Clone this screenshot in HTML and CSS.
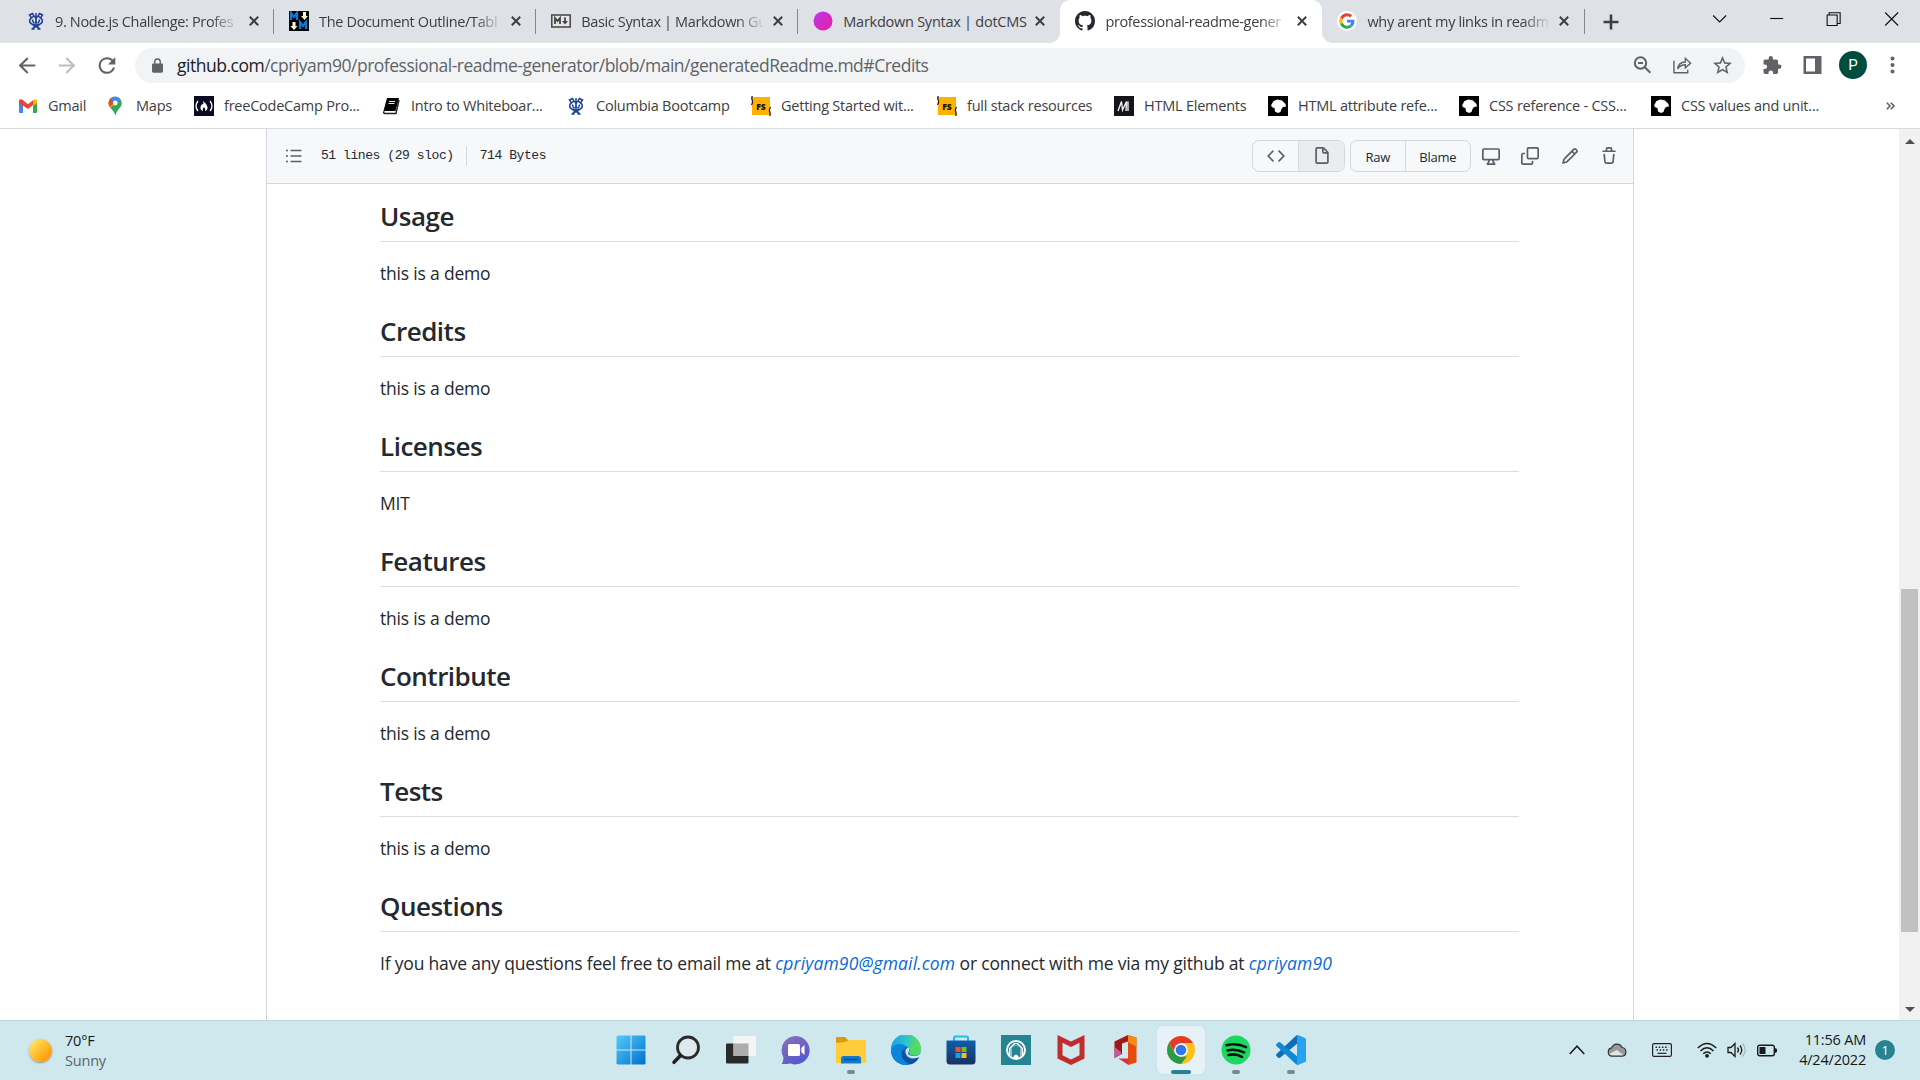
FILE: index.html
```html
<!DOCTYPE html>
<html lang="en">
<head>
<meta charset="utf-8">
<title>professional-readme-generator</title>
<link rel="stylesheet" href="styles.css">
</head>
<body>
<svg class="defs" width="0" height="0">
  <defs>
    <symbol id="close" viewBox="0 0 10 10"><path d="M.8.8l8.400 8.400M9.200.8L.8 9.200" stroke="#3c4043" stroke-width="2" fill="none"/></symbol>
    <symbol id="crown" viewBox="0 0 16 18"><g fill="none" stroke="#1d3f94" stroke-width="1.500"><path d="M1.500 3l3-1.500L6 4 3.500 6zM14.500 3l-3-1.500L10 4l2.500 2zM8 1v11M6 4q3 2 1.500 7M10 4Q7 6 8.500 11M3 6q-2 2-1 4.500Q4 13 8 13t6-2.500q1-2.500-1-4.500M4.500 7.500q0 2.500 2 4M11.500 7.500q0 2.500-2 4M4 17l2-1.500L11.500 13M12 17l-2-1.500L4.500 13M3.500 17h3M9.500 17h3"/></g></symbol>
    <symbol id="fs" viewBox="0 0 20 20"><path d="M1 1h18v18H1z" fill="#ffb000"/><path d="M1.500 0Q.2 1.500 1.200 4T.5 9M18.500 20q1.300-1.500.3-4T19.500 11" stroke="#222" stroke-width="1.300" fill="none"/><text x="10" y="13.500" text-anchor="middle" font-family="Open Sans, sans-serif" font-weight="800" font-size="8.500" letter-spacing="0" fill="#111">FS</text></symbol>
    <symbol id="dino" viewBox="0 0 20 20"><path d="M0 0h20v20H0z" fill="#000"/><path d="M3 9.500L5.500 5l4-1.500 4.500 1 3.500 3.500.5 2.500-3 .5-1.500 2-1 3-2.500 1-3-1.500-.5-3.500-2-.5z" fill="#fff"/></symbol>
  </defs>
</svg>

<header class="browser">
  <div class="tabstrip">
    <div class="tab"><svg class="fav" viewBox="-1 -1 20 20"><use href="#crown" width="16" height="18"/></svg><span class="tab-title">9. Node.js Challenge: Profes</span><svg class="x"><use href="#close"/></svg></div>
    <div class="tab"><svg class="fav" viewBox="0 0 20 20"><path d="M0 0h20v20H0z" fill="#000"/><path d="M2 9V2l3 4 3-4v7M11 18v-7l3 4 3-4v7" fill="none" stroke="#0a7bd6" stroke-width="2.200"/><path d="M14 1h3v4h2l-3.500 4L12 5h2zM3.500 11h3v4h2L5 19l-3.500-4h2z" fill="#fff8dc"/></svg><span class="tab-title">The Document Outline/Tabl</span><svg class="x"><use href="#close"/></svg></div>
    <div class="tab"><svg class="fav" viewBox="0 0 20 20"><path d="M.8 4h18.400v12H.8z" fill="#e6e6e6" stroke="#444" stroke-width="1.500"/><path d="M4 13V7l2.500 3L9 7v6M14 6.500v5" fill="none" stroke="#444" stroke-width="1.800"/><path d="M11 10h6l-3 3.500z" fill="#444"/></svg><span class="tab-title">Basic Syntax | Markdown Gu</span><svg class="x"><use href="#close"/></svg></div>
    <div class="tab"><svg class="fav" viewBox="0 0 20 20"><defs><linearGradient id="pk" x1="0" x2="1" y1="0" y2="1"><stop stop-color="#b83bf0"/><stop offset="1" stop-color="#ec1c9a"/></linearGradient></defs><circle cx="10" cy="10" r="9.500" fill="url(#pk)"/></svg><span class="tab-title">Markdown Syntax | dotCMS</span><svg class="x"><use href="#close"/></svg></div>
    <div class="tab active"><svg class="fav" viewBox="0 0 16 16"><path fill="#24292f" d="M8 0C3.580 0 0 3.580 0 8c0 3.540 2.290 6.530 5.470 7.590.4.070.55-.17.55-.38 0-.19-.01-.82-.01-1.490-2.010.37-2.530-.49-2.690-.94-.09-.23-.48-.94-.82-1.130-.28-.15-.68-.52-.01-.53.63-.01 1.080.58 1.230.82.72 1.210 1.870.87 2.330.66.07-.52.28-.87.51-1.070-1.780-.2-3.640-.89-3.640-3.950 0-.87.31-1.590.82-2.150-.08-.2-.36-1.020.08-2.120 0 0 .67-.21 2.200.82.64-.18 1.320-.27 2-.27s1.360.09 2 .27c1.530-1.040 2.200-.82 2.200-.82.44 1.100.16 1.920.08 2.120.51.56.82 1.270.82 2.150 0 3.070-1.870 3.750-3.650 3.950.29.25.54.73.54 1.480 0 1.070-.01 1.930-.01 2.200 0 .21.15.46.55.38A8.013 8.013 0 0016 8c0-4.420-3.580-8-8-8z"/></svg><span class="tab-title">professional-readme-gener</span><svg class="x"><use href="#close"/></svg></div>
    <div class="tab"><svg class="fav" viewBox="-7 -7 62 62"><circle cx="24" cy="24" r="31" fill="#fff"/><path fill="#EA4335" d="M24 9.500c3.540 0 6.710 1.220 9.210 3.600l6.850-6.850C35.900 2.380 30.470 0 24 0 14.620 0 6.510 5.380 2.560 13.220l7.980 6.190C12.430 13.720 17.740 9.500 24 9.500z"/><path fill="#4285F4" d="M46.980 24.550c0-1.570-.15-3.090-.38-4.550H24v9.020h12.940c-.58 2.960-2.260 5.480-4.780 7.180l7.730 6c4.510-4.180 7.090-10.360 7.090-17.650z"/><path fill="#FBBC05" d="M10.530 28.590A14.500 14.500 0 019.770 24c0-1.600.27-3.140.76-4.590l-7.980-6.190A23.900 23.900 0 000 24c0 3.880.92 7.540 2.560 10.780l7.970-6.190z"/><path fill="#34A853" d="M24 48c6.480 0 11.930-2.130 15.890-5.810l-7.730-6c-2.150 1.450-4.920 2.300-8.160 2.300-6.260 0-11.570-4.220-13.470-9.910l-7.980 6.190C6.510 42.620 14.620 48 24 48z"/></svg><span class="tab-title">why arent my links in readm</span><svg class="x"><use href="#close"/></svg></div>
    <svg class="newtab" viewBox="0 0 16 16"><path d="M8 .5v15M.5 8h15" stroke="#3c4043" stroke-width="2.600"/></svg>
    <div class="winctl">
      <svg viewBox="0 0 14 14"><path d="M.5 3.500l6.500 6.500 6.500-6.500"/></svg>
      <svg viewBox="0 0 14 14"><path d="M.5 6.500h13"/></svg>
      <svg viewBox="0 0 14 14"><path d="M.5 3h10v10.500H.5zM2.500 3V.7h11v10.800h-3"/></svg>
      <svg viewBox="0 0 14 14"><path d="M.5.5l13 13M13.500.5l-13 13"/></svg>
    </div>
  </div>

  <div class="toolbar">
    <div class="nav">
      <svg viewBox="0 0 24 24"><path d="M20 11H7.830l5.590-5.590L12 4l-8 8 8 8 1.410-1.410L7.830 13H20z"/></svg>
      <svg class="off" viewBox="0 0 24 24"><path d="M4 11h12.170l-5.590-5.590L12 4l8 8-8 8-1.410-1.410L16.170 13H4z"/></svg>
      <svg viewBox="0 0 24 24"><path d="M17.650 6.350A7.958 7.958 0 0012 4c-4.420 0-7.990 3.580-7.990 8s3.570 8 7.990 8c3.730 0 6.840-2.550 7.730-6h-2.080A5.990 5.990 0 0112 18c-3.310 0-6-2.690-6-6s2.690-6 6-6c1.660 0 3.140.69 4.220 1.780L13 11h7V4z"/></svg>
    </div>
    <div class="omnibox">
      <svg class="lock" viewBox="4 1 16 21"><path fill-rule="evenodd" d="M18 8.500h-1V6A5 5 0 007 6v2.500H6c-1.100 0-2 .9-2 2V20c0 1.100.9 2 2 2h12c1.100 0 2-.9 2-2v-9.500c0-1.100-.9-2-2-2zM9 8.500V6a3 3 0 016 0v2.500z"/></svg>
      <span class="url"><b>github.com</b>/cpriyam90/professional-readme-generator/blob/main/generatedReadme.md#Credits</span>
      <div class="omni-icons">
        <svg viewBox="0 0 18 18" class="line"><circle cx="7" cy="7" r="5.700"/><path d="M11.300 11.300l5.500 5.500M4.500 7h5"/></svg>
        <svg viewBox="0 0 20 18" class="line thin"><path d="M1 4.500v12.700h14.500V14M5 13c.4-4.500 3-7 8-7.200V2l5.500 5.200L13 12V8.800c-3.800 0-6 1.200-8 4.200z"/></svg>
        <svg viewBox="2 2 20 19"><path d="M22 9.240l-7.190-.62L12 2 9.190 8.630 2 9.240l5.460 4.730L5.820 21 12 17.270 18.180 21l-1.630-7.030zM12 15.400l-3.760 2.270 1-4.280-3.320-2.880 4.380-.38L12 6.100l1.710 4.040 4.380.38-3.320 2.880 1 4.280z"/></svg>
      </div>
    </div>
    <div class="tools">
      <svg viewBox="2 1 21 21"><path d="M20.500 11H19V7c0-1.100-.9-2-2-2h-4V3.500a2.500 2.500 0 00-5 0V5H4c-1.100 0-1.990.9-1.990 2v3.800H3.500a2.700 2.700 0 010 5.400H2V20c0 1.100.9 2 2 2h3.800v-1.500a2.700 2.700 0 015.400 0V22H17c1.100 0 2-.9 2-2v-4h1.500a2.500 2.500 0 000-5z"/></svg>
      <svg viewBox="0 0 18 18"><path fill-rule="evenodd" d="M0 0h18v18H0zM2.500 2.500v13h9v-13z"/></svg>
      <span class="avatar">P</span>
      <svg viewBox="0 0 18 18"><circle cx="9" cy="2.500" r="2"/><circle cx="9" cy="9" r="2"/><circle cx="9" cy="15.500" r="2"/></svg>
    </div>
  </div>

  <nav class="bookmarks">
    <a><svg viewBox="0 0 20 20"><path d="M1 4h4v13H2q-1 0-1-1z" fill="#4285f4"/><path d="M15 4h4v12q0 1-1 1h-3z" fill="#34a853"/><path d="M1 4.500Q2 2.500 4 3.500l6 4.800 6-4.800v4.700L10 13 1 7z" fill="#ea4335"/><path d="M15 4.500q3-2.500 4 0V7l-4 3z" fill="#fbbc04"/></svg><span>Gmail</span></a>
    <a><svg viewBox="0 0 20 20"><path d="M2.500 7a6.700 6.700 0 0113.300 0c0 5-5.300 6-6.300 13C8.500 14 2.500 12 2.500 7z" fill="#34a853"/><path d="M2.500 7q0-3 2-5l5 5-5.500 5Q2.500 10 2.500 7z" fill="#fbbc04"/><path d="M2.500 7.500q0-3.500 2-5.300L9 6 4 11z" fill="#ea4335"/><path d="M4.300 2.400a6.800 6.800 0 0110.500 1.200L10 8z" fill="#4285f4"/><circle cx="9.200" cy="7" r="2.400" fill="#fff"/></svg><span>Maps</span></a>
    <a><svg viewBox="0 0 20 20"><path d="M0 0h20v20H0z" fill="#0a0a23"/><path d="M4 5q-4 5 0 10M16 5q4 5 0 10" stroke="#fff" stroke-width="1.300" fill="none"/><path d="M9 5q4 3 4.500 6 .3 3-2.500 4 1-2-1-4-2 2-1 4-3-1-2.500-4Q7 8 9.500 8z" fill="#fff"/></svg><span>freeCodeCamp Pro...</span></a>
    <a><svg viewBox="0 0 20 20"><path d="M6 2h12l-3.500 13H2.500z" fill="#000"/><path d="M18 4l-3 13.500H3.500q-2-1 0-2" stroke="#222" stroke-width="1.400" fill="none"/><path d="M8 5.500h6M7.500 7.500h6" stroke="#fff" stroke-width=".9"/></svg><span>Intro to Whiteboar...</span></a>
    <a><svg viewBox="-2 -1 20 20"><use href="#crown" width="16" height="18"/></svg><span>Columbia Bootcamp</span></a>
    <a><svg><use href="#fs"/></svg><span>Getting Started wit...</span></a>
    <a><svg><use href="#fs"/></svg><span>full stack resources</span></a>
    <a><svg viewBox="0 0 20 20"><path d="M0 0h20v20H0z" fill="#15141a"/><path d="M4 15L7.500 5.500 8.500 14l4-8.500-.5 9.500M14 5.500v9.500" stroke="#eee" stroke-width="1.400" fill="none"/></svg><span>HTML Elements</span></a>
    <a><svg><use href="#dino"/></svg><span>HTML attribute refe...</span></a>
    <a><svg><use href="#dino"/></svg><span>CSS reference - CSS...</span></a>
    <a><svg><use href="#dino"/></svg><span>CSS values and unit...</span></a>
    <svg class="more" viewBox="0 0 9 8"><path d="M.8.8L4 4 .8 7.200M4.800.8L8 4 4.800 7.200" fill="none" stroke="#5f6368" stroke-width="1.600"/></svg>
  </nav>
</header>

<div class="viewport">
  <main class="file">
    <div class="file-head">
      <svg class="toc" viewBox="0 0 16 14"><g fill="#57606a"><circle cx="1" cy="1.500" r="1"/><circle cx="1" cy="7" r="1"/><circle cx="1" cy="12.500" r="1"/></g><path d="M4.500 1.500h11M4.500 7h11M4.500 12.500h11" stroke="#57606a" stroke-width="1.600"/></svg>
      <span class="mono">51 lines (29 sloc)</span><i class="vr"></i><span class="mono">714 Bytes</span>
      <div class="group views">
        <span><svg class="oct" viewBox="0 0 16 16"><path d="M4.720 3.220a.75.75 0 011.060 1.060L2.060 8l3.720 3.720a.75.75 0 11-1.060 1.060L.47 8.530a.75.75 0 010-1.060zm6.560 0a.75.75 0 10-1.060 1.060L13.940 8l-3.720 3.720a.75.75 0 101.060 1.060l4.250-4.250a.75.75 0 000-1.060z"/></svg></span>
        <span class="selected"><svg class="oct" viewBox="0 0 16 16"><path fill-rule="evenodd" d="M3.750 1.500a.25.25 0 00-.25.25v11.500c0 .138.112.25.25.25h8.500a.25.25 0 00.25-.25V6H9.750A1.750 1.750 0 018 4.250V1.500H3.750zm5.750.56v2.190c0 .138.112.25.25.25h2.190L9.500 2.060zM2 1.750C2 .784 2.784 0 3.750 0h5.086c.464 0 .909.184 1.237.513l3.414 3.414c.329.328.513.773.513 1.237v8.086A1.750 1.750 0 0112.250 15h-8.500A1.750 1.750 0 012 13.250V1.750z"/></svg></span>
      </div>
      <div class="group raw"><span>Raw</span><span>Blame</span></div>
      <div class="acts">
        <svg class="oct" viewBox="0 0 16 16"><path fill-rule="evenodd" d="M1.750 2.500h12.500a.25.25 0 01.25.25v7.500a.25.25 0 01-.25.25H1.750a.25.25 0 01-.25-.25v-7.500a.25.25 0 01.25-.25zM14.250 1H1.750A1.750 1.750 0 000 2.750v7.500C0 11.216.784 12 1.750 12h3.727c-.1 1.041-.52 1.872-1.292 2.757A.75.75 0 004.750 16h6.500a.75.75 0 00.565-1.243c-.772-.885-1.193-1.716-1.292-2.757h3.727A1.750 1.750 0 0016 10.250v-7.500A1.750 1.750 0 0014.250 1zM9.018 12H6.982a5.720 5.720 0 01-.765 2.500h3.566a5.720 5.720 0 01-.765-2.500z"/></svg>
        <svg class="oct" viewBox="0 0 16 16"><g fill="none" stroke="#57606a" stroke-width="1.500"><rect x="5.750" y=".75" width="9.500" height="9.500" rx="1"/><path d="M3.500 5.750H1.750a1 1 0 00-1 1v7.500a1 1 0 001 1h7.500a1 1 0 001-1V12.500"/></g></svg>
        <svg class="oct" viewBox="0 0 16 16"><path fill-rule="evenodd" d="M11.013 1.427a1.750 1.750 0 012.474 0l1.086 1.086a1.750 1.750 0 010 2.474l-8.610 8.610c-.21.21-.47.364-.756.445l-3.251.93a.75.75 0 01-.927-.928l.929-3.250a1.750 1.750 0 01.445-.758l8.610-8.610zm1.414 1.060a.25.25 0 00-.354 0L10.811 3.750l1.439 1.440 1.263-1.263a.25.25 0 000-.354l-1.086-1.086zM11.189 6.250L9.750 4.810l-6.286 6.287a.25.25 0 00-.064.108l-.558 1.953 1.953-.558a.249.249 0 00.108-.064l6.286-6.286z"/></svg>
        <svg class="oct" viewBox="0 0 16 16"><path fill-rule="evenodd" d="M6.500 1.750a.25.25 0 01.25-.25h2.500a.25.25 0 01.25.25V3h-3V1.750zm4.500 0V3h2.250a.75.75 0 010 1.500H2.750a.75.75 0 010-1.500H5V1.750C5 .784 5.784 0 6.750 0h2.500C10.216 0 11 .784 11 1.750zM4.496 6.675a.75.75 0 10-1.492.15l.66 6.600A1.750 1.750 0 005.405 15h5.190c.9 0 1.652-.681 1.741-1.576l.66-6.600a.75.75 0 00-1.492-.149l-.66 6.600a.25.25 0 01-.249.225h-5.190a.25.25 0 01-.249-.225l-.66-6.600z"/></svg>
      </div>
    </div>
    <article class="markdown">
      <h2>Usage</h2><p>this is a demo</p>
      <h2>Credits</h2><p>this is a demo</p>
      <h2>Licenses</h2><p>MIT</p>
      <h2>Features</h2><p>this is a demo</p>
      <h2>Contribute</h2><p>this is a demo</p>
      <h2>Tests</h2><p>this is a demo</p>
      <h2>Questions</h2><p>If you have any questions feel free to email me at <a>cpriyam90@gmail.com</a> or connect with me via my github at <a>cpriyam90</a></p>
    </article>
  </main>
  <div class="scrollbar">
    <svg viewBox="0 0 10 5"><path d="M0 5l5-5 5 5z"/></svg>
    <div class="thumb"></div>
    <svg viewBox="0 0 10 5"><path d="M0 0l5 5 5-5z"/></svg>
  </div>
</div>

<footer class="taskbar">
  <div class="weather"><i class="sun"></i><div><div>70°F</div><div class="dim">Sunny</div></div></div>
  <div class="apps">
    <span class="app"><svg viewBox="0 0 30 30"><defs><linearGradient id="win" x1="0" y1="0" x2="1" y2="1" ><stop stop-color="#53cbfb"/><stop offset="1" stop-color="#0070cf"/></linearGradient></defs><path fill="url(#win)" d="M1.500.5H14.500v14H.5v-13zM15.500.5h13l1 1v13h-14zM.5 15.500h14v14h-13l-1-1zM15.500 15.500h14v13l-1 1h-13z"/></svg></span>
    <span class="app"><svg viewBox="0 0 30 30"><circle cx="17" cy="12.500" r="10.500" fill="#dce9ed" stroke="#2b2b2b" stroke-width="2.800"/><path d="M9.500 20.500l-6.500 6.800" stroke="#222" stroke-width="3.600" stroke-linecap="round"/></svg></span>
    <span class="app"><svg viewBox="0 0 30 30"><rect y="8.500" width="22.500" height="20" rx="1" fill="#2a2a2a"/><rect x="7.500" y="1" width="22.500" height="20" rx="1" fill="#f5f5f5" opacity=".95"/><path d="M7.500 8.500h15V21h-15z" fill="#adadad"/></svg></span>
    <span class="app"><svg viewBox="0 0 30 30"><defs><linearGradient id="chat" x1="0" x2=".6" y1="0" y2="1"><stop stop-color="#8f70b5"/><stop offset="1" stop-color="#5458cf"/></linearGradient></defs><path d="M15 1a14.200 14.200 0 11-5.500 27.500Q6 29 .8 29q2-3 1.500-7A14.200 14.200 0 0115 1z" fill="url(#chat)"/><rect x="7" y="9" width="12" height="12" rx="1.500" fill="#fff"/><path d="M20.300 13l3.200-3v10l-3.200-3z" fill="#fff"/></svg></span>
    <span class="app running"><svg viewBox="0 0 30 30"><path d="M0 3q0-1 1-1h8l3 3h16v4H0z" fill="#dc9c0a"/><path d="M0 8l10-1.200 3-1.800h16q1 0 1 1v22H0z" fill="#ffcc3c"/><path d="M5 28.500v-5q0-2.500 2.500-2.500h15q2.500 0 2.500 2.500v5z" fill="#0f7bd0"/><path d="M8 24.500h14" stroke="#0a4b8c" stroke-width="1.500"/></svg></span>
    <span class="app"><svg viewBox="0 0 30 30"><defs><linearGradient id="eg" x1="0" x2="1"><stop stop-color="#1f9fe0"/><stop offset=".5" stop-color="#2fc3d0"/><stop offset="1" stop-color="#66e04a"/></linearGradient></defs><circle cx="15" cy="15" r="15" fill="#0f6fc5"/><path d="M0 14A15 15 0 0130 14q0 6-6 6.500-6 .3-6-3 1.500-2-.5-4.500-2.500-3-8-2Q3 12 0 17z" fill="url(#eg)"/><path d="M0 15q2-6 8-6 6 0 7 3-4 1-4.500 6 0 8 8 11.500-4 1-8 0Q0 26 0 15z" fill="#0a84dc"/><path d="M10.500 18q0 8 9 11.500 5.500-1.500 8.500-7-8 3-12-.5-3-3-2-6.500-3 0-3.500 2.500z" fill="#10509a"/><path d="M18 12.500q-4 1-3.500 4.500.5 5 6.500 6.500 5 0 9-2V15q0 6-7 6-6 0-6-3 1.500-2 1-5.500z" fill="#cfe8ee"/><path d="M18.500 13q1 3 0 5 2 3 6 2.500 5-.5 5.500-6.500l-8-6z" fill="#52d76a"/></svg></span>
    <span class="app"><svg viewBox="0 0 30 30"><defs><linearGradient id="st" x1="0" x2="0" y1="0" y2="1"><stop stop-color="#0c5fae"/><stop offset="1" stop-color="#1c305f"/></linearGradient></defs><path d="M8 6V3q0-1.500 1.500-1.500h11Q22 1.500 22 3v3" stroke="#25b8f2" stroke-width="2" fill="none"/><path d="M.5 5.500h29V26q0 3.500-3.500 3.500H4Q.5 29.500.5 26z" fill="url(#st)"/><path d="M9.500 12h5v5h-5z" fill="#f1511b"/><path d="M15.500 12h5v5h-5z" fill="#80bb09"/><path d="M9.500 18h5v5h-5z" fill="#06a5f0"/><path d="M15.500 18h5v5h-5z" fill="#fbbc09"/></svg></span>
    <span class="app"><svg viewBox="0 0 30 30"><path d="M0 0h30v30H0z" fill="#268391"/><circle cx="15" cy="15" r="9" fill="none" stroke="#fff" stroke-width="2"/><path d="M8 20v-7l5-5h4l5 5v7l-3 2v-9l-4-3-4 3v9z" fill="#fff"/><path d="M10 21v-7.500L15 9l5 4.500V21" fill="none" stroke="#268391" stroke-width="1"/><path d="M12.500 24v-3l2.500-1.500 2.500 1.500v3z" fill="#fff"/></svg></span>
    <span class="app"><svg viewBox="0 0 30 30"><path fill-rule="evenodd" d="M1.500 0L15 6.500 28.500 0v23.500L15 30 1.500 23.500zM6.500 7.800v12.500L15 24.500l8.500-4.200V7.800L15 12z" fill="#c12d2e"/></svg></span>
    <span class="app"><svg viewBox="0 0 30 30"><path d="M17 0l8.500 2.500v25L17 30z" fill="#e64a0c"/><path d="M17 0v6.500l-6 2V19l-7.500 4V6.500z" fill="#a51717"/><path d="M3.500 12L10 17v2.500L3.500 23z" fill="#c55a9b"/><path d="M7.500 23.500h10V30z" fill="#e02a44"/><path d="M17 0l8.500 2.500V12L17 7z" fill="#f58a16"/></svg></span>
    <span class="app running current"><svg viewBox="0 0 30 30"><circle cx="15" cy="15" r="14" fill="#fbc116"/><path d="M2.900 8A14 14 0 0127.100 8H15l-5 11z" fill="#e33b2e"/><path d="M2.900 8L9 18.500 15 21.500h6L15 29A14 14 0 012.900 8z" fill="#2c9a45"/><circle cx="15" cy="15" r="6.800" fill="#fff"/><circle cx="15" cy="15" r="5.300" fill="#2f78ea"/></svg></span>
    <span class="app running"><svg viewBox="0 0 30 30"><circle cx="15" cy="15" r="14.500" fill="#1ed760"/><path d="M5.500 10.200q10-2.500 19.500 2M6.500 15.400q8.500-2 16.500 2M7.500 20q7-1.800 13.500 1.800" fill="none" stroke="#0a120c" stroke-width="2.600" stroke-linecap="round"/></svg></span>
    <span class="app running"><svg viewBox="0 0 30 30"><path d="M22 0v8L4 22.800Q3 23.500 2 22.500L.5 21q-1-1 0-2L20 .8z" fill="#0a6fb8"/><path d="M22 30v-8L4 7.200Q3 6.500 2 7.500L.5 9q-1 1 0 2L20 29.200z" fill="#1288d4"/><path d="M22 0l7 3q1 .5 1 1.500v21q0 1-1 1.500l-7 3q-.5 0-1-1V1q.5-1 1-1z" fill="#25a3f2"/></svg></span>
  </div>
  <div class="tray">
    <svg class="t1" viewBox="0 0 16 10"><path d="M.7 9L8 1.200 15.300 9" fill="none" stroke="#1b1b1b" stroke-width="1.500"/></svg>
    <svg class="t2" viewBox="0 0 20 14"><path d="M5 13.200a4.200 4.200 0 01-.3-8.300A5.500 5.500 0 0115 4.500a4.400 4.400 0 01.3 8.700z" fill="#999"/><path d="M2 11l8-4 7 5.500-2 .7H5z" fill="#e4e4e4"/><path d="M5 13.200a4.200 4.200 0 01-.3-8.300A5.500 5.500 0 0115 4.500a4.400 4.400 0 01.3 8.700z" fill="none" stroke="#333" stroke-width="1.200"/></svg>
    <svg class="t3" viewBox="0 0 20 14"><rect x=".6" y=".6" width="18.800" height="12.800" rx="1.500" fill="none" stroke="#222" stroke-width="1.200"/><path d="M3.500 4.200h13M4.500 7h12" stroke="#222" stroke-width="1.400" stroke-dasharray="1.500 1.700"/><path d="M5.500 10.300h9" stroke="#222" stroke-width="1.200"/></svg>
    <svg class="t4" viewBox="0 0 20 16"><path d="M.8 6Q10-3 19.200 6M3.500 9Q10 2.500 16.500 9M6.200 11.700q3.800-3.500 7.600 0" fill="none" stroke="#1b1b1b" stroke-width="1.500"/><circle cx="10" cy="13.800" r="1.900" fill="#1b1b1b"/></svg>
    <svg class="t5" viewBox="0 0 20 16"><path d="M1 5.500h3L8 1.500v13L4 10.500H1z" fill="none" stroke="#1b1b1b" stroke-width="1.300"/><path d="M10.500 5.500q2 2.500 0 5M13 3.500q3.500 4.500 0 9" fill="none" stroke="#1b1b1b" stroke-width="1.300"/><path d="M15.500 1.500q5.500 6.500 0 13" fill="none" stroke="#a9b8bc" stroke-width="1.300"/></svg>
    <svg class="t6" viewBox="0 0 20 12"><rect x=".7" y=".7" width="16.600" height="10.600" rx="2" fill="none" stroke="#1b1b1b" stroke-width="1.400"/><path d="M2.500 2.500h6v7h-6zM18 3.500l2 1v3l-2 1z" fill="#1b1b1b"/></svg>
    <div class="clock"><div>11:56 AM</div><div>4/24/2022</div></div>
    <span class="badge">1</span>
  </div>
</footer>
</body>
</html>
```
FILE: styles.css
```css
* { box-sizing: border-box; }
body {
  margin: 0;
  width: 1920px;
  height: 1080px;
  overflow: hidden;
  display: flex;
  flex-direction: column;
  background: #fff;
  color: #24292f;
  font-family: "Open Sans", "Noto Sans", sans-serif;
}
svg { display: block; flex: none; }
.defs { position: absolute; }

/* browser chrome */
.browser { height: 129px; border-bottom: 1px solid #d9dbde; color: #3c4043; }
.tabstrip { height: 43px; background: #dee1e6; display: flex; align-items: center; padding-left: 12px; }
.tab {
  position: relative;
  width: 262.1px;
  height: 43px;
  padding: 0 0 1px 15px;
  display: flex;
  align-items: center;
  flex: none;
}
.tab::after { content: ""; position: absolute; right: 0; top: 9px; width: 1px; height: 25px; background: #85888d; }
.tab:nth-child(4)::after, .tab.active::after { display: none; }
.fav { width: 20px; height: 20px; margin-right: 10px; }
.tab:first-child .fav { margin-right: 8px; }
.tab:first-child .tab-title { width: 186px; }
.tab-title {
  width: 184px;
  white-space: nowrap;
  font-size: 14.5px;
  letter-spacing: -0.35px;
  -webkit-mask-image: linear-gradient(90deg, #000 156px, transparent 184px);
  mask-image: linear-gradient(90deg, #000 156px, transparent 184px);
}
.tab:nth-child(4) .tab-title { -webkit-mask-image: none; mask-image: none; letter-spacing: -0.25px; }
.x { width: 10px; height: 10px; margin-left: 8px; }
.active { background: #fff; border-radius: 10px 10px 0 0; }
.active::before {
  content: "";
  position: absolute;
  left: -10px;
  right: -10px;
  bottom: 0;
  height: 10px;
  background:
    radial-gradient(circle at 0 0, #dee1e6 9.500px, #fff 10px) left / 10px 10px no-repeat,
    radial-gradient(circle at 100% 0, #dee1e6 9.500px, #fff 10px) right / 10px 10px no-repeat;
}
.newtab { width: 16px; height: 16px; margin-left: 18.500px; }
.winctl { display: flex; margin-left: auto; height: 37px; align-self: flex-start; }
.winctl svg { width: 57.300px; height: 14px; margin-top: 12px; fill: none; stroke: #111; stroke-width: 1.100; }

.toolbar { height: 44px; display: flex; align-items: center; fill: #5f6368; }
.nav { display: flex; padding-left: 7px; }
.nav svg { width: 40px; height: 25px; }
.nav .off { fill: #bcbec1; }
.omnibox {
  width: 1610px;
  height: 35px;
  margin-left: 8px;
  border-radius: 18px;
  background: #f1f3f4;
  display: flex;
  align-items: center;
  padding: 0 13px 0 17px;
}
.lock { width: 11px; height: 15px; margin-right: 14px; }
.url { font-size: 17.500px; letter-spacing: -0.490px; color: #5f6368; white-space: nowrap; }
.url b { font-weight: 400; color: #202124; }
.omni-icons { display: flex; margin-left: auto; gap: 21px; }
.omni-icons svg { width: 19px; height: 18px; }
.line { fill: none; stroke: #5f6368; stroke-width: 2; }
.thin { stroke-width: 1.500; }
.tools { display: flex; align-items: center; margin-left: 18px; gap: 21px; }
.tools svg { width: 19px; height: 18px; }
.tools svg:last-child { margin-left: -1px; }
.avatar {
  width: 28px;
  height: 28px;
  margin: 0 -4px;
  border-radius: 50%;
  background: #004d40;
  color: #fff;
  font: 15px/28px Roboto, sans-serif;
  text-align: center;
}

.bookmarks {
  height: 37px;
  padding-left: 18px;
  display: grid;
  grid-template-columns: 88px 88px 187px 185px 185px 186px 177px 154px 191px 192px 235px 9px;
  align-items: center;
  font-size: 14.500px;
  letter-spacing: -0.230px;
  white-space: nowrap;
}
.bookmarks a { display: flex; align-items: center; gap: 10px; }
.bookmarks a svg { width: 20px; height: 20px; }
.more { width: 9px; height: 8px; }

/* page */
.viewport { height: 891px; display: flex; padding-left: 266px; }
.file { width: 1368px; border: 1px solid #d0d7de; border-width: 0 1px; overflow: hidden; }
.file-head {
  height: 55px;
  background: #f6f8fa;
  border-bottom: 1px solid #d0d7de;
  display: flex;
  align-items: center;
  padding: 0 15px 0 19px;
}
.toc { width: 16px; height: 14px; }
.mono { font: 13px/20px "Liberation Mono", monospace; letter-spacing: -0.430px; white-space: pre; }
.toc + .mono { margin-left: 19px; }
.vr { width: 1px; height: 20px; margin: 0 13px 0 12px; background: #d0d7de; }
.group {
  height: 32px;
  display: flex;
  border: 1px solid #d4d8dc;
  border-radius: 7px;
  overflow: hidden;
  font-size: 13px;
  font-weight: 500;
}
.group span { display: flex; align-items: center; justify-content: center; }
.group span + span { border-left: 1px solid #d4d8dc; }
.views { margin-left: auto; width: 93px; }
.views span { width: 46px; }
.selected { background: #ebecf0; }
.raw { width: 121px; margin-left: 5px; letter-spacing: -0.200px; }
.raw span { padding-top: 1px; }
.raw span:first-child { width: 54px; }
.raw span:last-child { flex: 1; }
.oct { width: 18px; height: 18px; fill: #57606a; }
.acts { display: flex; gap: 21.400px; margin-left: 11px; padding-bottom: 1px; }

.markdown { margin-left: 113px; width: 1139px; padding-top: 15px; font-size: 17.500px; line-height: 27px; letter-spacing: -0.190px; }
.markdown h2 {
  margin: 0 0 18px;
  height: 43px;
  border-bottom: 1px solid #d8dee4;
  font-size: 26px;
  line-height: 34px;
  font-weight: 600;
  letter-spacing: -0.500px;
}
.markdown p { margin: 0 0 27px; white-space: nowrap; }
.markdown a { color: #0969da; font-style: italic; letter-spacing: 0.150px; }

.scrollbar { margin-left: auto; width: 21px; background: #f1f1f1; display: flex; flex-direction: column; align-items: center; }
.scrollbar svg { width: 10px; height: 5px; fill: #505050; margin-top: 10px; }
.thumb { width: 17px; height: 343px; margin-top: 445px; background: #c1c1c1; }
.thumb + svg { margin-top: auto; margin-bottom: 8px; }

/* taskbar */
.taskbar {
  height: 60px;
  border-top: 1px solid #bdd7dc;
  background: #cfe8ee;
  display: grid;
  grid-template-columns: 607px 708px 1fr;
  font-size: 14.500px;
  line-height: 20px;
  letter-spacing: -0.200px;
  color: #16191a;
}
.weather { display: flex; align-items: center; padding-left: 29px; gap: 13px; }
.sun { width: 23px; height: 23px; border-radius: 50%; background: linear-gradient(135deg, #ffdf5c 15%, #ff9500 90%); box-shadow: 0 1px 2px #8a9a9a; }
.dim { color: #5b6467; }
.apps { display: flex; gap: 7px; padding-top: 5px; }
.app { width: 48px; height: 48px; border-radius: 5px; display: flex; flex-direction: column; align-items: center; padding-top: 9px; }
.app svg { width: 30px; height: 30px; }
.running::after { content: ""; width: 8px; height: 4px; margin-top: 5px; border-radius: 2px; background: #7c878a; }
.current { background: #e6f2f7; box-shadow: 0 0 1px #a9bfc5; }
.current::after { width: 20px; background: #268391; }
.tray { display: flex; align-items: center; justify-content: flex-end; padding: 0 25px 1px 0; }
.t1 { width: 16px; height: 10px; margin-right: 22px; }
.t2 { width: 20px; height: 14px; margin-right: 25px; }
.t3 { width: 20px; height: 14px; margin-right: 25px; }
.t4 { width: 20px; height: 16px; margin-right: 10px; }
.t5 { width: 20px; height: 16px; margin-right: 10px; }
.t6 { width: 20px; height: 13px; }
.clock { width: 89px; text-align: right; }
.badge { width: 20px; height: 20px; margin-left: 9px; border-radius: 50%; background: #268391; color: #fff; text-align: center; font-size: 13px; }
```
